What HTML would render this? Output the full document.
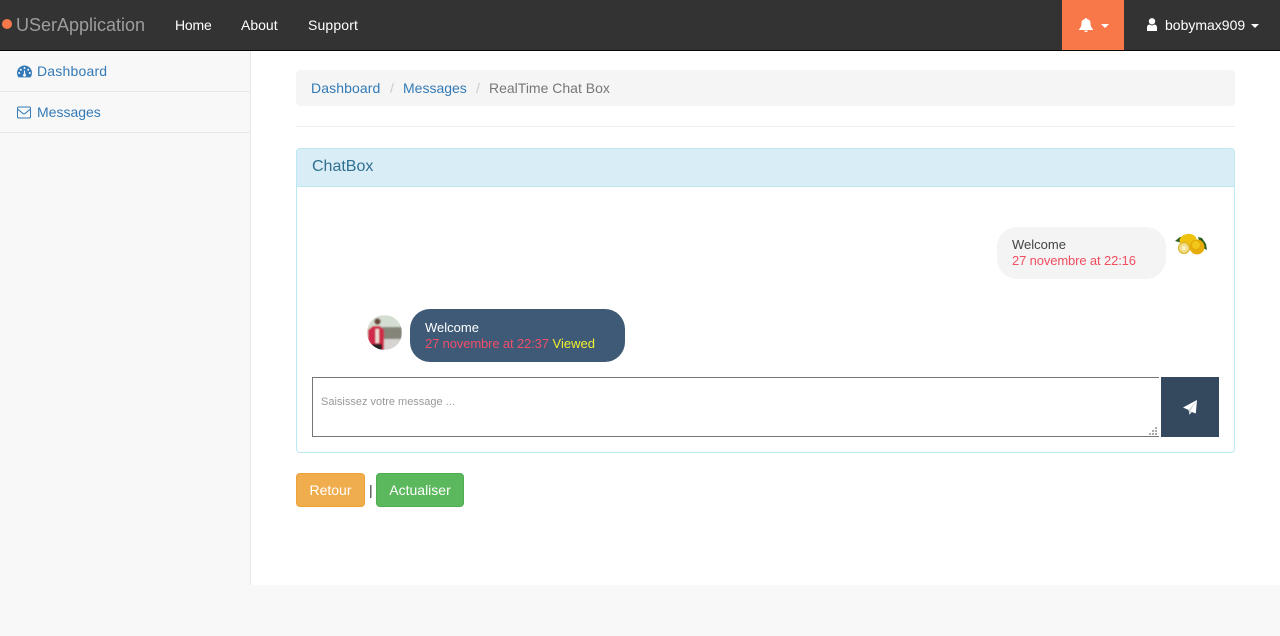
<!DOCTYPE html>
<html><head><meta charset="utf-8"><title>ChatBox</title>
<style>
html,body{margin:0;padding:0;width:1280px;height:636px;overflow:hidden;background:#f8f8f8;font-family:"Liberation Sans",Arial,sans-serif;font-size:14px;color:#333}
.a{position:absolute;white-space:nowrap}
a{text-decoration:none;color:inherit}
svg{display:block;position:absolute}
.nav{left:0;top:0;width:1280px;height:50px;background:#333;border-bottom:1px solid #080808}
.caret{position:absolute;width:0;height:0;border-left:4px solid transparent;border-right:4px solid transparent;border-top:4px solid #fff}
.l{line-height:20px}
.m{font-size:13px;line-height:16px}
</style></head><body>
<div class="a nav"></div>
<div class="a" style="left:2px;top:19px;width:10px;height:10px;border-radius:50%;background:#f9784a"></div>
<a href="#" class="a" style="left:16px;top:15px;font-size:18px;line-height:20px;color:#9d9d9d">USerApplication</a>
<a href="#" class="a l" style="left:175px;top:15px;color:#fff;letter-spacing:-.2px">Home</a>
<a href="#" class="a l" style="left:241px;top:15px;color:#fff">About</a>
<a href="#" class="a l" style="left:308px;top:15px;color:#fff;letter-spacing:.15px">Support</a>
<div class="a" style="left:1062px;top:0;width:62px;height:50px;background:#f9784a"></div>
<svg style="left:1079px;top:18px" width="14" height="14" viewBox="0 0 14 14"><path fill="#fff" d="M7 0c.7 0 1.100.4 1.100 1.100C10.300 1.500 11.500 3 11.500 5c0 3 .8 4.700 2.500 6.200v.8H0v-.8C1.700 9.700 2.500 8 2.500 5c0-2 1.200-3.500 3.400-3.900C5.900.4 6.300 0 7 0zM5.200 12.500h3.600c0 .9-.8 1.500-1.800 1.500s-1.800-.6-1.800-1.500z"/></svg>
<div class="caret" style="left:1101px;top:24px"></div>
<svg style="left:1147px;top:18px" width="10" height="13" viewBox="0 0 10 13"><circle cx="5" cy="3.300" r="3.200" fill="#fff"/><path fill="#fff" d="M0 13V9.300C0 7.700 1.200 6.700 2.500 6.500 3.200 7.100 4 7.400 5 7.400s1.800-.3 2.500-.9C8.800 6.700 10 7.700 10 9.300V13z"/></svg>
<a href="#" class="a l" style="left:1165px;top:15px;color:#fff">bobymax909</a>
<div class="caret" style="left:1251px;top:24px"></div>

<div class="a" style="left:0;top:51px;width:250px;height:534px;background:#f8f8f8;border-right:1px solid #e7e7e7"></div>
<div class="a" style="left:251px;top:51px;width:1029px;height:534px;background:#fff"></div>
<div class="a" style="left:0;top:91px;width:250px;height:1px;background:#e7e7e7"></div>
<div class="a" style="left:0;top:132px;width:250px;height:1px;background:#e7e7e7"></div>
<svg style="left:17px;top:65px" width="15" height="13" viewBox="0 0 15 13"><path fill="#337ab7" fill-rule="evenodd" d="M7.500 .5C3.400.5 0 3.800 0 7.900c0 1.600.5 3 1.300 4.200.1.200.3.300.5.300h11.400c.2 0 .4-.1.500-.3.800-1.200 1.300-2.600 1.300-4.200C15 3.800 11.600.5 7.500.5zM7.500 2a1 1 0 1 1 0 2 1 1 0 0 1 0-2zM3.800 3.700a1 1 0 1 1 0 2 1 1 0 0 1 0-2zM2.200 7a1 1 0 1 1 0 2 1 1 0 0 1 0-2zM12.800 7a1 1 0 1 1 0 2 1 1 0 0 1 0-2zM11.200 3.700a1 1 0 1 1 0 2 1 1 0 0 1 0-2zM8 5.500l.2 3.400c.5.300.8.800.8 1.300 0 .9-.7 1.500-1.500 1.500S6 11.100 6 10.200c0-.5.300-1 .8-1.300L7 5.500z"/></svg>
<a href="#" class="a l" style="left:37px;top:61px;color:#337ab7;letter-spacing:.2px">Dashboard</a>
<svg style="left:17px;top:106px" width="14" height="13" viewBox="0 0 14 13"><rect x=".5" y="1" width="13" height="11" rx="1.200" fill="none" stroke="#337ab7"/><path d="M.8 3.200L5.700 7.300c.8.600 1.800.6 2.600 0l4.900-4.100" fill="none" stroke="#337ab7"/></svg>
<a href="#" class="a l" style="left:37px;top:102px;color:#337ab7">Messages</a>

<div class="a" style="left:296px;top:70px;width:939px;height:36px;background:#f5f5f5;border-radius:4px"></div>
<a href="#" class="a l" style="left:311px;top:78px;color:#337ab7;letter-spacing:.1px">Dashboard</a>
<span class="a l" style="left:390px;top:78px;color:#ccc">/</span>
<a href="#" class="a l" style="left:403px;top:78px;color:#337ab7">Messages</a>
<span class="a l" style="left:476px;top:78px;color:#ccc">/</span>
<span class="a l" style="left:489px;top:78px;color:#777">RealTime Chat Box</span>
<div class="a" style="left:296px;top:126px;width:939px;height:1px;background:#eee"></div>

<div class="a" style="left:296px;top:148px;width:937px;height:303px;border:1px solid #bce8f1;border-radius:4px;background:#fff"></div>
<div class="a" style="left:297px;top:149px;width:937px;height:37px;background:#d9edf7;border-bottom:1px solid #bce8f1;border-radius:3px 3px 0 0"></div>
<div class="a" style="left:312px;top:158px;font-size:16px;line-height:18px;color:#31708f">ChatBox</div>

<div class="a" style="left:997px;top:227px;width:169px;height:52px;background:#f4f4f4;border-radius:20px"></div>
<div class="a m" style="left:1012px;top:237px;color:#444">Welcome</div>
<div class="a m" style="left:1012px;top:253px;color:#f14e5f;letter-spacing:-.13px">27 novembre at 22:16</div>
<svg style="left:1174px;top:232px" width="34" height="26" viewBox="0 0 34 26">
<path fill="#2f5d1c" d="M1 9l5-4 5 1-3 5zM24 5l4 1 4 6 1 6-6-3z"/>
<ellipse cx="14" cy="8" rx="8.500" ry="6" fill="#efc20f" transform="rotate(-8 14 8)"/>
<ellipse cx="23" cy="15" rx="7.500" ry="7.500" fill="#e5ac0a"/>
<ellipse cx="22" cy="13" rx="4" ry="4" fill="#f3c61a"/>
<circle cx="10" cy="16" r="5.500" fill="#f1dc85" stroke="#d9ae20"/>
<circle cx="10" cy="16" r="2.200" fill="#fbf3c6"/>
</svg>

<div class="a" style="left:410px;top:309px;width:215px;height:53px;background:#3f5a77;border-radius:20px"></div>
<div class="a m" style="left:425px;top:320px;color:#fff">Welcome</div>
<div class="a m" style="left:425px;top:336px;color:#f14e6a"><span style="letter-spacing:-.13px">27 novembre at 22:37</span> <span style="color:#f2f02e">Viewed</span></div>
<svg style="left:367px;top:315px" width="35" height="35" viewBox="0 0 35 35">
<defs><clipPath id="c"><circle cx="17.500" cy="17.500" r="17.500"/></clipPath><filter id="b"><feGaussianBlur stdDeviation=".9"/></filter></defs>
<g clip-path="url(#c)"><g filter="url(#b)">
<rect width="35" height="35" fill="#d5ded2"/>
<rect x="15" y="12" width="20" height="12" fill="#86857a"/>
<rect x="15" y="24" width="20" height="11" fill="#d6d3d0"/>
<path fill="#cf2b48" d="M1 35V15l5-4h7l4 4v20z"/>
<rect x="8.500" y="14" width="3.500" height="14" fill="#ecdcd4"/>
<circle cx="10.500" cy="6.500" r="3.200" fill="#6a4639"/>
<rect x="4" y="29" width="11" height="6" fill="#222"/>
</g></g></svg>

<div class="a" style="left:312px;top:377px;width:846px;height:58px;background:#fff;border:1px solid #767676;border-right:0"></div>
<div class="a" style="left:321px;top:396px;font-size:11px;line-height:12px;color:#999">Saisissez votre message ...</div>
<svg style="left:1148px;top:426px" width="10" height="10" viewBox="0 0 10 10"><path fill="#aaa" d="M7 1h2v2H7zM4 4h2v2H4zM7 4h2v2H7zM1 7h2v2H1zM4 7h2v2H4zM7 7h2v2H7z"/></svg>
<div class="a" style="left:1161px;top:377px;width:58px;height:60px;background:#34495e"></div>
<svg style="left:1182px;top:399px" width="16" height="17" viewBox="0 0 16 17"><path fill="#fff" d="M15 1L13.800 14.500 9.800 13 7.500 15.800 6.600 11 1 8.500z"/><path fill="#cfd4d9" d="M15 1L6.600 11 7.500 15.800 9.800 13 8.300 12z"/></svg>

<a href="#" class="a" style="left:296px;top:473px;width:67px;height:32px;line-height:32px;text-align:center;background:#f0ad4e;border:1px solid #eea236;border-radius:4px;color:#fff">Retour</a>
<span class="a l" style="left:369px;top:480px;color:#333">|</span>
<a href="#" class="a" style="left:376px;top:473px;width:86px;height:32px;line-height:32px;text-align:center;background:#5cb85c;border:1px solid #4cae4c;border-radius:4px;color:#fff">Actualiser</a>
</body></html>
